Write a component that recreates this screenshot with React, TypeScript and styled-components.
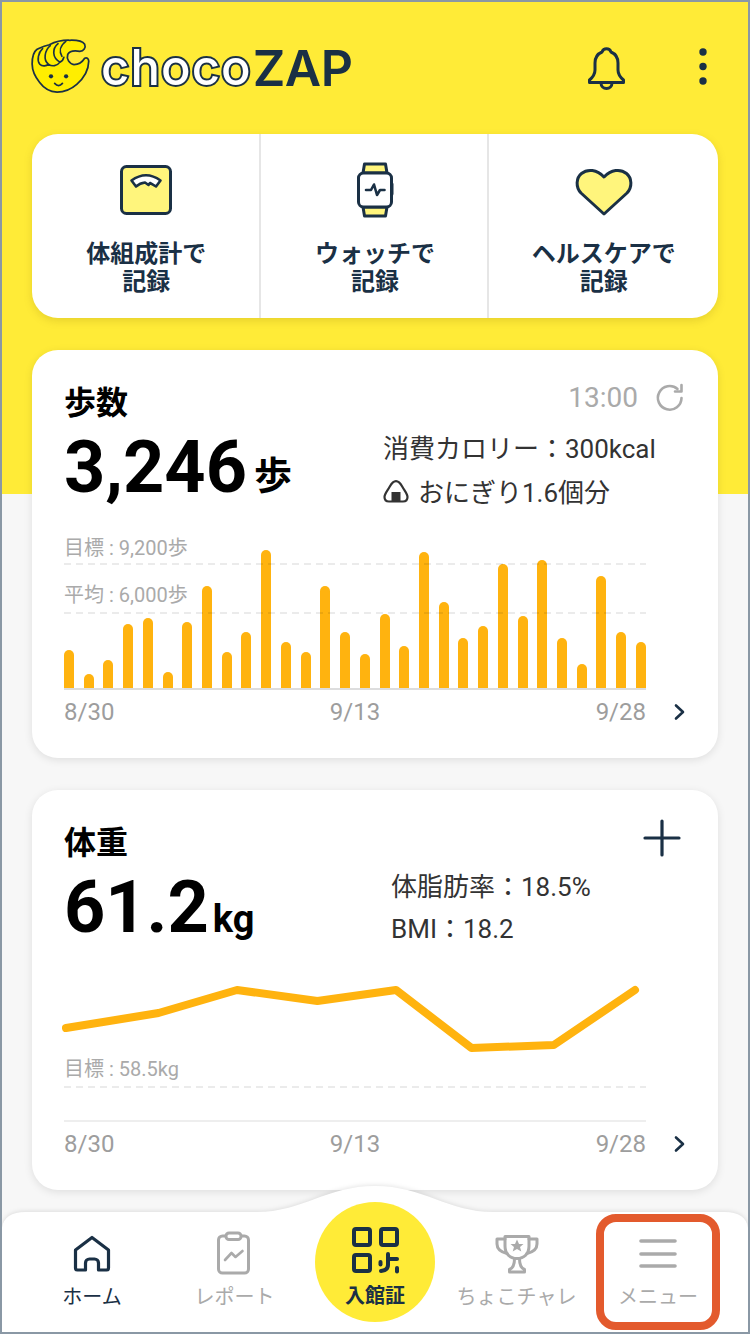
import styled, { createGlobalStyle } from "styled-components";

const navy = "#1a3045";
const grayText = "#aaaaaa";
const yellow = "#ffeb37";
const paleYellow = "#fff57c";
const amber = "#ffb30f";

const GlobalStyle = createGlobalStyle`
  html,body{
    margin:0;
    padding:0;
    background:#fff;
  }
  *{
    box-sizing:border-box;
  }
  body{
    font-family:Roboto,"Noto Sans CJK JP",sans-serif;
  }
`;

const Frame = styled.div`
  position:relative;
  width:750px;
  height:1334px;
  border:2px solid #8a98a5;
  overflow:hidden;
  padding:0 30px;
  background:linear-gradient(to bottom, ${yellow} 492px, #f7f7f7 492px);
`;

const Header = styled.header`
  height:132px;
  padding-top:36px;
  display:flex;
  align-items:flex-start;
  justify-content:space-between;
`;

const Brand = styled.div`
  display:flex;
  align-items:flex-start;
  gap:11px;
  margin-left:-2px;
`;

const Wordmark = styled.div`
  margin-top:-2px;
  font-family:Inter,Roboto,sans-serif;
  line-height:64px;
  white-space:nowrap;
  display:flex;
  span{
    font-size:49px;
    font-weight:500;
    letter-spacing:1.1px;
    color:#fff;
    -webkit-text-stroke:4px ${navy};
    paint-order:stroke fill;
  }
  b{
    font-size:50px;
    font-weight:600;
    letter-spacing:-0.5px;
    color:${navy};
    margin-left:1px;
  }
`;

const HeaderIcons = styled.div`
  display:flex;
  align-items:flex-start;
  gap:71px;
  margin-right:10px;
  padding-top:8px;
  svg:last-child{
    margin-top:1px;
  }
`;

const QuickPanel = styled.section`
  height:184px;
  margin-bottom:32px;
  display:grid;
  grid-template-columns:1fr 1fr 1fr;
  background:#fff;
  border-radius:26px;
  box-shadow:0 3px 8px rgba(120,100,0,.18);
`;

const QuickCell = styled.div`
  padding:28px 0 0 2px;
  display:flex;
  flex-direction:column;
  align-items:center;
  border-right:2px solid #e6e6e6;
  &:last-child{
    padding-left:0;
    border-right:none;
  }
`;

const QuickLabel = styled.div`
  margin-top:22px;
  text-align:center;
  font-size:24px;
  font-weight:700;
  line-height:28px;
  color:${navy};
`;

const Card = styled.section<{ $height: number }>`
  height:${(p) => p.$height}px;
  margin-bottom:32px;
  padding:28px 0 0 32px;
  background:#fff;
  border-radius:26px;
  box-shadow:0 2px 8px rgba(0,0,0,.1);
`;

const CardTop = styled.div`
  display:flex;
  align-items:flex-start;
  justify-content:space-between;
  padding-right:33px;
  height:44px;
`;

const CardTitle = styled.h2`
  margin:3px 0 0 0;
  font-size:32px;
  font-weight:700;
  line-height:44px;
  color:#000;
`;

const Updated = styled.div`
  display:flex;
  align-items:center;
  gap:17px;
  margin-top:3px;
  font-size:28px;
  color:${grayText};
`;

const Metrics = styled.div`
  display:flex;
  height:100px;
`;

const Big = styled.div<{ $width: number }>`
  width:${(p) => p.$width}px;
  padding-top:4px;
  font-weight:700;
  font-size:72px;
  line-height:84px;
  color:#000;
  white-space:nowrap;
`;

const Unit = styled.small<{ $gap: number; $lift: number }>`
  font-size:38px;
  font-weight:700;
  margin-left:${(p) => p.$gap}px;
  position:relative;
  top:${(p) => -p.$lift}px;
`;

const Details = styled.div<{ $top: number; $line: number }>`
  padding-top:${(p) => p.$top}px;
  font-size:26px;
  line-height:${(p) => p.$line}px;
  color:#333;
  white-space:nowrap;
`;

const DetailRow = styled.div`
  display:flex;
  align-items:center;
  gap:9px;
  margin-top:1px;
  svg{
    margin-top:-5px;
  }
`;

const Chart = styled.div<{ $height: number }>`
  position:relative;
  width:582px;
  height:${(p) => p.$height}px;
  display:flex;
  align-items:flex-end;
  justify-content:space-between;
  border-bottom:2px solid #dddddd;
`;

const Bar = styled.div`
  width:10px;
  background:${amber};
  border-radius:5px 5px 0 0;
`;

const GoalLine = styled.div<{ $bottom: number; $labelGap?: number }>`
  position:absolute;
  left:0;
  right:0;
  bottom:${(p) => p.$bottom}px;
  height:2px;
  background:repeating-linear-gradient(to right, rgba(0,0,0,.08) 0 7px, transparent 7px 12px);
  span{
    position:absolute;
    left:0;
    bottom:${(p) => p.$labelGap ?? 5}px;
    font-size:20px;
    line-height:24px;
    color:${grayText};
    white-space:nowrap;
  }
`;

const LineChartBox = styled.div`
  position:relative;
  width:582px;
  height:160px;
  border-bottom:2px solid #eeeeee;
  svg{
    position:absolute;
    left:-4px;
    top:16px;
  }
`;

const ChartFooter = styled.div`
  display:flex;
  align-items:center;
  margin-top:8px;
`;

const Dates = styled.div`
  width:582px;
  display:flex;
  justify-content:space-between;
  font-size:24px;
  line-height:28px;
  color:#9d9d9d;
`;

const Chevron = styled.svg`
  margin-left:27px;
`;

const AddButton = styled.svg`
  margin:1px 4px 0 0;
`;

const Nav = styled.nav`
  position:absolute;
  left:0;
  bottom:0;
  width:746px;
  height:146px;
`;

const NavShape = styled.svg`
  position:absolute;
  inset:0;
  filter:drop-shadow(0 -1px 2px rgba(0,0,0,.1));
`;

const NavItems = styled.div`
  position:relative;
  height:146px;
  padding:16px 0 0 20px;
  display:grid;
  grid-template-columns:140px 145px 136px 147px 136px;
  align-items:start;
`;

const NavItem = styled.div<{ $active?: boolean }>`
  height:120px;
  padding-top:29px;
  display:flex;
  flex-direction:column;
  align-items:center;
  font-size:20px;
  line-height:24px;
  color:${(p) => (p.$active ? navy : grayText)};
  white-space:nowrap;
  svg{
    margin-bottom:10px;
  }
`;

const Pass = styled.div`
  justify-self:center;
  width:120px;
  height:120px;
  padding-top:24px;
  border-radius:50%;
  background:${yellow};
  display:flex;
  flex-direction:column;
  align-items:center;
  font-size:20px;
  font-weight:700;
  line-height:24px;
  color:${navy};
  svg{
    margin-bottom:10px;
  }
`;

const Highlight = styled.div`
  position:absolute;
  left:594px;
  top:28px;
  width:124px;
  height:116px;
  border:8px solid #e35a2d;
  border-radius:20px;
`;

const stepBars = [38,14,28,64,70,16,66,102,36,56,138,46,36,102,56,34,74,42,136,86,50,62,124,72,128,50,24,112,56,46];

const Logo = () => (
  <svg width="60" height="58" viewBox="0 0 62 58" style={{ marginTop: -1 }}>
    <path
      d="M20 7C27 3.500 34 2.200 41 2.400C47 2.200 54 2.800 56.500 6.500C58 10 55.500 13.800 51.500 13.800C47 13 41 13 39 17C37.500 21.500 40.500 27 45.500 27.500C50 27.500 54 25 56.500 21C58.500 20 60.500 21 60.700 24C60.500 33 55 42 48.300 48C42 53.500 35 56 28 56C20 55.500 14 51.500 10 46C5 40 2.300 34 2.200 27C2.200 21 3 15 7 12C11 9.500 15 8.500 20 7Z"
      fill="#ffee00"
      stroke={navy}
      strokeWidth="1.8"
      strokeLinejoin="round"
    />
    <path
      d="M13 11C8.500 15 7 23 10 27C13 30 17 29 19 27M21 8C15 13 13.500 23 19 27C23 30 28 29 31 25M29 6C23 11 22.500 20 31 25C33.500 24 34.500 22 35 20M37 3.500C31 8 30 14 33 19"
      fill="none"
      stroke={navy}
      strokeWidth="1.7"
      strokeLinecap="round"
    />
    <circle cx="21.700" cy="39.700" r="2.200" fill={navy} />
    <circle cx="37.300" cy="39.700" r="2.200" fill={navy} />
    <path d="M25.500 47Q29.500 51.500 33.500 47" fill="none" stroke={navy} strokeWidth="1.800" strokeLinecap="round" />
  </svg>
);

const BellIcon = () => (
  <svg width="40" height="44" viewBox="0 0 40 44" fill="none" stroke={navy} strokeWidth="3" strokeLinejoin="round">
    <path d="M2.500 36.500H36.500V34C33 31 31 28 31 24V17C31 11 27.500 7.500 24 6A4.800 4.800 0 0 0 15 6C11.500 7.500 8 11 8 17V24C8 28 6 31 2.500 34Z" />
    <path d="M14 37A5.500 5.500 0 0 0 25 37" />
  </svg>
);

const DotsIcon = () => (
  <svg width="10" height="40" viewBox="0 0 10 40" fill={navy}>
    <circle cx="5" cy="5" r="3.700" />
    <circle cx="5" cy="19.500" r="3.700" />
    <circle cx="5" cy="34" r="3.700" />
  </svg>
);

const ScaleIcon = () => (
  <svg width="60" height="56" viewBox="0 0 60 56" stroke={navy} strokeWidth="3" strokeLinejoin="round">
    <rect x="5.500" y="4.500" width="49" height="47" rx="5" fill={paleYellow} />
    <path d="M15.500 18.500Q30 8 44.500 18.500L40 24.500Q36 22 34 21L32.500 23L29 20.500Q24 21 20 24.500Z" fill="#fff" strokeWidth="2.600" />
  </svg>
);

const WatchIcon = () => (
  <svg width="60" height="56" viewBox="0 0 60 56" stroke={navy} strokeWidth="3" strokeLinejoin="round" strokeLinecap="round">
    <path d="M18 11L19.500 2H40.500L42 11Z" fill={paleYellow} />
    <path d="M18 45L19.500 54H40.500L42 45Z" fill={paleYellow} />
    <rect x="13.500" y="11" width="33" height="34" rx="5" fill="#fff" />
    <path d="M47 22V32" />
    <path d="M21 28H26L29 22.500L32 33L35 28H39.500" fill="none" strokeWidth="2.600" />
  </svg>
);

const HeartIcon = () => (
  <svg width="60" height="56" viewBox="0 0 60 56" stroke={navy} strokeWidth="3" strokeLinejoin="round">
    <path d="M30 52L7 31C1.500 25 2 16 7.500 11.500C13.500 6.500 23 7.500 30 15C37 7.500 46.500 6.500 52.500 11.500C58 16 58.500 25 53 31Z" fill={paleYellow} />
  </svg>
);

const RefreshIcon = () => (
  <svg width="30" height="30" viewBox="0 0 30 30" fill="none" stroke={grayText} strokeWidth="2.600" strokeLinejoin="round" strokeLinecap="round">
    <path d="M26.500 15A11.800 11.800 0 1 1 22.500 6" />
    <path d="M26.500 2V8.500H20" />
  </svg>
);

const RiceIcon = () => (
  <svg width="26" height="24" viewBox="0 0 26 24">
    <path d="M13 2.200C10 2.200 8.500 4.500 6.500 8C4.500 11.500 1.500 15 1.500 18C1.500 21 3.500 22.500 6 22.500H20C22.500 22.500 24.500 21 24.500 18C24.500 15 21.500 11.500 19.500 8C17.500 4.500 16 2.200 13 2.200Z" fill="none" stroke="#333" strokeWidth="2.200" />
    <rect x="8.500" y="13" width="9" height="9.500" fill="#333" />
  </svg>
);

const ChevronRight = () => (
  <Chevron width="14" height="18" viewBox="0 0 14 18" fill="none" stroke={navy} strokeWidth="2.600" strokeLinecap="round" strokeLinejoin="round">
    <path d="M3 2.500L10 9L3 15.500" />
  </Chevron>
);

const PlusIcon = () => (
  <AddButton width="38" height="38" viewBox="0 0 38 38" stroke={navy} strokeWidth="3.200" strokeLinecap="round">
    <path d="M19 2V36M2 19H36" />
  </AddButton>
);

const HomeIcon = () => (
  <svg width="44" height="44" viewBox="0 0 44 44" fill="none" stroke={navy} strokeWidth="3.200" strokeLinejoin="round">
    <path d="M22 6.500L5.500 19V37A2 2 0 0 0 7.500 39H15.500V32A4 4 0 0 1 19.500 28H24.500A4 4 0 0 1 28.500 32V39H36.500A2 2 0 0 0 38.500 37V19Z" />
  </svg>
);

const ReportIcon = () => (
  <svg width="44" height="44" viewBox="0 0 44 44" fill="none" stroke={grayText} strokeWidth="3" strokeLinejoin="round" strokeLinecap="round">
    <rect x="5.500" y="5" width="30" height="37" rx="4" />
    <rect x="13" y="2" width="15" height="6.500" rx="3" fill="#fff" />
    <path d="M12 29L18.500 22L22.500 26L29.500 20" strokeWidth="2.600" />
  </svg>
);

const TrophyIcon = () => (
  <svg width="44" height="44" viewBox="0 0 44 44" fill="none" stroke={grayText} strokeWidth="3" strokeLinejoin="round" strokeLinecap="round">
    <path d="M10 5.500H34V15C34 23 29 27.500 22 27.500C15 27.500 10 23 10 15Z" />
    <path d="M10 8H2V13C2 18 6 21 12 22.500M34 8H42V13C42 18 38 21 32 22.500" />
    <path d="M19.500 28C19.500 34 18 37 14.500 38.500V41H29.500V38.500C26 37 24.500 34 24.500 28" />
    <path d="M22 8.500L24 13H28.500L25 16L26.300 20.500L22 18L17.700 20.500L19 16L15.500 13H20Z" fill={grayText} stroke="none" />
  </svg>
);

const MenuIcon = () => (
  <svg width="44" height="44" viewBox="0 0 44 44" stroke={grayText} strokeWidth="3.600" strokeLinecap="round">
    <path d="M5 10H39M5 23H39M5 35H39" />
  </svg>
);

const QrIcon = () => (
  <svg width="50" height="48" viewBox="0 0 50 48" fill="none" stroke={navy} strokeWidth="4" strokeLinejoin="round" strokeLinecap="round">
    <rect x="4" y="3" width="16" height="16" rx="2" />
    <rect x="31" y="3" width="16" height="16" rx="2" />
    <rect x="4" y="29" width="16" height="16" rx="2" />
    <path d="M38 28V39C38 42 36 44.500 31 45" />
    <path d="M38 33H47" />
    <path d="M30.500 36V38.500" />
    <path d="M47 42V45.500" />
  </svg>
);

export default function App() {
  return (
    <>
      <GlobalStyle />
      <Frame>
        <Header>
          <Brand>
            <Logo />
            <Wordmark>
              <span>choco</span>
              <b>ZAP</b>
            </Wordmark>
          </Brand>
          <HeaderIcons>
            <BellIcon />
            <DotsIcon />
          </HeaderIcons>
        </Header>

        <QuickPanel>
          <QuickCell>
            <ScaleIcon />
            <QuickLabel>体組成計で<br />記録</QuickLabel>
          </QuickCell>
          <QuickCell>
            <WatchIcon />
            <QuickLabel>ウォッチで<br />記録</QuickLabel>
          </QuickCell>
          <QuickCell>
            <HeartIcon />
            <QuickLabel>ヘルスケアで<br />記録</QuickLabel>
          </QuickCell>
        </QuickPanel>

        <Card $height={408}>
          <CardTop>
            <CardTitle>歩数</CardTitle>
            <Updated>
              13:00
              <RefreshIcon />
            </Updated>
          </CardTop>
          <Metrics>
            <Big $width={319}>3,246<Unit $gap={7} $lift={3}>歩</Unit></Big>
            <Details $top={6} $line={43}>
              <div>消費カロリー：300kcal</div>
              <DetailRow>
                <RiceIcon />
                おにぎり1.6個分
              </DetailRow>
            </Details>
          </Metrics>
          <Chart $height={168}>
            {stepBars.map((h, i) => (
              <Bar key={i} style={{ height: h }} />
            ))}
            <GoalLine $bottom={123}><span>目標 : 9,200歩</span></GoalLine>
            <GoalLine $bottom={74} $labelGap={7}><span>平均 : 6,000歩</span></GoalLine>
          </Chart>
          <ChartFooter>
            <Dates>
              <span>8/30</span>
              <span>9/13</span>
              <span>9/28</span>
            </Dates>
            <ChevronRight />
          </ChartFooter>
        </Card>

        <Card $height={400}>
          <CardTop>
            <CardTitle>体重</CardTitle>
            <PlusIcon />
          </CardTop>
          <Metrics>
            <Big $width={327}>61.2<Unit $gap={4} $lift={0}>kg</Unit></Big>
            <Details $top={4} $line={42}>
              <div>体脂肪率：18.5%</div>
              <div>BMI：18.2</div>
            </Details>
          </Metrics>
          <LineChartBox>
            <svg width="590" height="90" viewBox="60 978 590 90" fill="none" stroke={amber} strokeWidth="8" strokeLinecap="round" strokeLinejoin="round">
              <polyline points="66,1028 158.500,1013 237,990 317.400,1001 396,990 471.500,1048 553.800,1045 635,990" />
            </svg>
            <GoalLine $bottom={32} $labelGap={7}><span>目標 : 58.5kg</span></GoalLine>
          </LineChartBox>
          <ChartFooter>
            <Dates>
              <span>8/30</span>
              <span>9/13</span>
              <span>9/28</span>
            </Dates>
            <ChevronRight />
          </ChartFooter>
        </Card>

        <Nav>
          <NavShape width="746" height="146" viewBox="0 0 746 146">
            <path d="M0 146V42Q2 26 24 26H255C300 26 325 0 373 0C421 0 446 26 491 26H722Q744 26 746 42V146Z" fill="#fff" />
          </NavShape>
          <NavItems>
            <NavItem $active>
              <HomeIcon />
              ホーム
            </NavItem>
            <NavItem>
              <ReportIcon />
              レポート
            </NavItem>
            <Pass>
              <QrIcon />
              入館証
            </Pass>
            <NavItem>
              <TrophyIcon />
              ちょこチャレ
            </NavItem>
            <NavItem>
              <MenuIcon />
              メニュー
            </NavItem>
          </NavItems>
          <Highlight />
        </Nav>
      </Frame>
    </>
  );
}
